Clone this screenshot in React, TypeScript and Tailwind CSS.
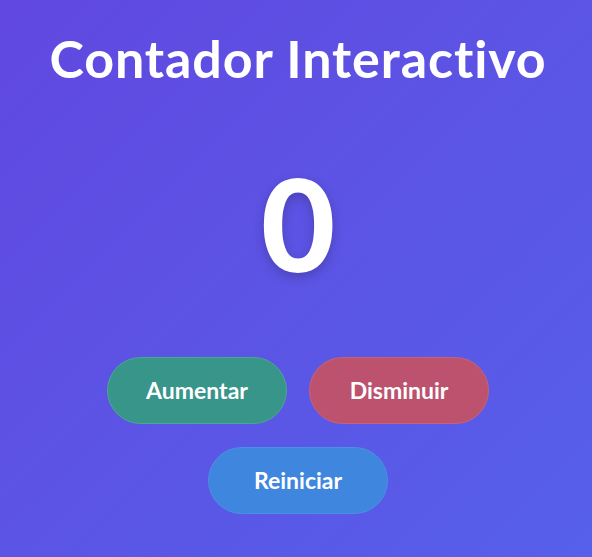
export default function App() {
  return (
    <div className="min-h-[557px] w-full bg-[linear-gradient(135deg,#6148e0_0%,#5660ea_100%)] flex flex-col items-center pt-[22px] pl-[4px] font-['Lato',sans-serif] text-white">
      <h1 className="text-[52px] font-bold leading-[72px] tracking-[0.9px]">Contador Interactivo</h1>

      <div className="mt-[59px] text-[128px] font-black leading-[140px] [text-shadow:0_4px_12px_rgba(0,0,0,0.2)]">
        0
      </div>

      <div className="mt-[64px] flex flex-col items-center gap-[23px]">
        <div className="flex gap-[22px]">
          <button className="w-[180px] h-[67px] rounded-full bg-[#38958a] border border-[#4aa88e] text-[23px] font-bold">
            Aumentar
          </button>
          <button className="w-[180px] h-[67px] rounded-full bg-[#bc526e] border border-[#c9607a] text-[23px] font-bold">
            Disminuir
          </button>
        </div>
        <button className="w-[180px] h-[67px] rounded-full bg-[#3f86de] border border-[#4d8fe4] text-[23px] font-bold">
          Reiniciar
        </button>
      </div>
    </div>
  );
}
